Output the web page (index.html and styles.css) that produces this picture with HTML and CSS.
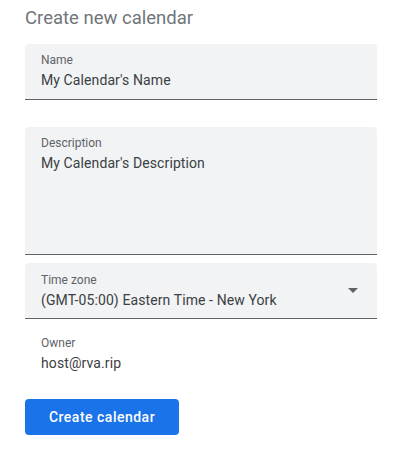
FILE: index.html
```html
<!DOCTYPE html>
<html>
<head>
<meta charset="utf-8">
<link rel="stylesheet" href="styles.css">
</head>
<body>
<div class="page">
  <h1 class="title">Create new calendar</h1>
  <div class="field field-name">
    <div class="label">Name</div>
    <div class="value">My Calendar's Name</div>
  </div>
  <div class="field field-desc">
    <div class="label">Description</div>
    <div class="value">My Calendar's Description</div>
  </div>
  <div class="field field-tz">
    <div class="tz-text">
      <div class="label">Time zone</div>
      <div class="value">(GMT-05:00) Eastern Time - New York</div>
    </div>
    <svg class="arrow" width="10" height="5" viewBox="0 0 10 5"><path d="M0 0 L10 0 L5 5 Z" fill="#5f6368"/></svg>
  </div>
  <div class="owner">
    <div class="label">Owner</div>
    <div class="value">host@rva.rip</div>
  </div>
  <button class="btn">Create calendar</button>
</div>
</body>
</html>
```
FILE: styles.css
```css
* { box-sizing: border-box; }
body {
  margin: 0;
  background: #fff;
  font-family: Roboto, "Noto Sans", sans-serif;
}
.page {
  width: 377px;
  padding: 6px 0 0 25px;
  display: flex;
  flex-direction: column;
}
.title {
  margin: 0;
  font-size: 18.5px;
  font-weight: 400;
  color: #70757a;
  line-height: 24px;
  height: 38px;
}
.field {
  background: #f1f3f4;
  border-radius: 4px 4px 0 0;
  border-bottom: 1px solid #5f6368;
  padding: 8px 16px 0 16px;
}
.label {
  font-size: 12px;
  line-height: 16px;
  color: #5f6368;
}
.value {
  font-size: 14px;
  letter-spacing: 0.1px;
  line-height: 20px;
  color: #3c4043;
  margin-top: 2px;
}
.field-name { height: 56px; }
.field-desc { height: 128px; margin-top: 27px; }
.field-tz {
  height: 56px;
  margin-top: 8px;
  display: flex;
  align-items: center;
  padding-top: 0;
  padding-right: 19px;
}
.tz-text { flex: 1; }
.arrow { display: block; }
.owner {
  padding: 16px 16px 0 16px;
  height: 80px;
}
.btn {
  align-self: flex-start;
  width: 154px;
  height: 36px;
  border: none;
  border-radius: 4px;
  background: #1a73e8;
  color: #fff;
  font-family: Roboto, sans-serif;
  font-size: 14px;
  font-weight: 500;
  letter-spacing: 0.5px;
  padding: 0;
}
```
